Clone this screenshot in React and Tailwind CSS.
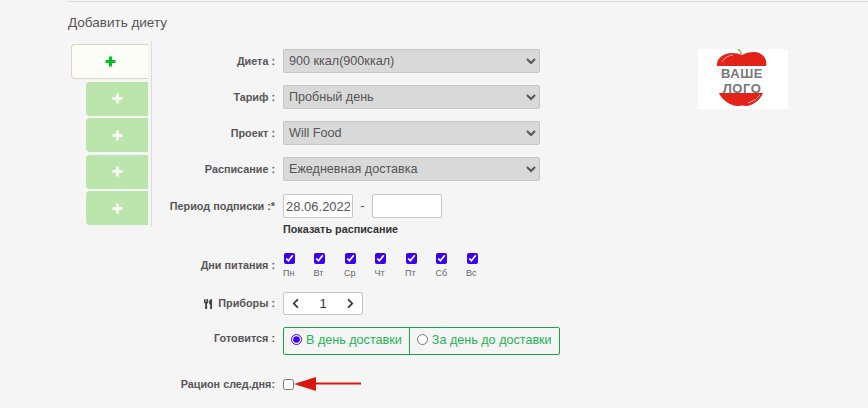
import React from "react";
import { FaUtensils, FaChevronLeft, FaChevronRight } from "react-icons/fa";

const days = ["Пн", "Вт", "Ср", "Чт", "Пт", "Сб", "Вс"];
const selects = [
  { label: "Диета :", value: "900 ккал(900ккал)" },
  { label: "Тариф :", value: "Пробный день" },
  { label: "Проект :", value: "Will Food" },
  { label: "Расписание :", value: "Ежедневная доставка" },
];

function Label({ children, width, className = "" }) {
  return (
    <div className={`${width} shrink-0 mr-[8px] text-right text-[10.8px] font-bold leading-[14px] text-[#555] whitespace-nowrap ${className}`}>
      {children}
    </div>
  );
}

function Plus({ color }) {
  return (
    <svg width="11" height="11" viewBox="0 0 11 11">
      <path d="M4 0.5 H7 V4 H10.5 V7 H7 V10.5 H4 V7 H0.5 V4 H4 Z" fill={color} />
    </svg>
  );
}

function Logo() {
  return (
    <div className="w-[90px] h-[60px] bg-white mt-[8px]">
      <svg width="90" height="60" viewBox="0 0 90 60">
        <path d="M43 5 Q43 2 40 0" stroke="#8ab34a" strokeWidth="1.5" fill="none" />
        <path d="M19 17 C18 10 25 4 34 4 Q40 4 44 6 Q49 3 56 3 C64 3 70 10 68 17 Z" fill="#e3231a" />
        <path d="M21 44 L65 44 C63 50 55 57 48 57 Q44 56 40 57 C32 57 23 50 21 44 Z" fill="#e3231a" />
        <path d="M24 13 Q27 7 35 6" stroke="#f6b0a8" strokeWidth="1" fill="none" />
        <path d="M50 54 Q58 52 62 46" stroke="#f6b0a8" strokeWidth="1" fill="none" />
        <text x="44" y="28.5" textAnchor="middle" fontFamily="Liberation Sans, sans-serif" fontSize="13" letterSpacing="0.5" fontWeight="700" fill="#777777">ВАШЕ</text>
        <text x="44" y="43.5" textAnchor="middle" fontFamily="Liberation Sans, sans-serif" fontSize="13" letterSpacing="0.5" fontWeight="700" fill="#777777">ЛОГО</text>
      </svg>
    </div>
  );
}

export default function App() {
  return (
    <div className="h-[408px] overflow-hidden bg-[#f5f5f5] pl-[68px] font-['Liberation_Sans',Arial,sans-serif]">
      <div className="h-[2px] mt-px border-t border-[#dcdcdc]"></div>
      <h3 className="mt-[12px] text-[13.5px] leading-[16px] text-[#555]">Добавить диету</h3>

      <div className="flex mt-[10px]">
        {/* tabs */}
        <div className="w-[84px] h-[186px] pl-[3px] border-r border-[#dddddd] pt-[3px] shrink-0">
          <div className="w-[77px] h-[35px] flex items-center justify-center rounded-l-[4px] border border-r-0 border-[#d9d4c4] bg-[#fdfdf8]">
            <Plus color="#00c020" />
          </div>
          <div className="ml-[15px] mt-[2.5px] flex flex-col gap-[2.5px]">
            {[0, 1, 2, 3].map((i) => (
              <div key={i} className="w-[62px] h-[34px] flex items-center justify-center rounded-l-[4px] bg-[#bce5ad]">
                <Plus color="#f5f9f2" />
              </div>
            ))}
          </div>
        </div>

        {/* form */}
        <div className="shrink-0 w-[389px] -ml-[1px] pt-[8px] text-[#555]">
          {selects.map((s) => (
            <div key={s.label} className="flex items-center h-[24px] mb-[12px]">
              <Label width="w-[124px]">{s.label}</Label>
              <select defaultValue={s.value} className="w-[257px] h-[24px] rounded-[2px] border border-[#c6c6c6] bg-[#d9d9d9] pl-[1px] text-[12.6px] text-[#555]">
                <option>{s.value}</option>
              </select>
            </div>
          ))}
          <div className="flex items-center h-[24px] mt-[13px]">
            <Label width="w-[124px]">Период подписки :*</Label>
            <input readOnly value="28.06.2022" className="w-[70px] h-[24px] rounded-[2px] border border-[#c6c6c6] bg-white px-[2px] text-[13px] text-[#555]" />
            <span className="w-[19px] text-center text-[13px]">-</span>
            <input readOnly className="w-[70px] h-[24px] rounded-[2px] border border-[#c6c6c6] bg-white" />
          </div>
          <div className="ml-[132px] mt-[4px] text-[10.8px] font-bold leading-[14px] text-[#333]">Показать расписание</div>
        </div>

        <div className="ml-[158px]"><Logo /></div>
      </div>

      <div className="-ml-[68px] text-[#555]">
        <div className="flex items-center h-[27px] mt-[17px]">
          <Label width="w-[275px]" className="mb-[3px]">Дни питания :</Label>
          <div className="flex">
            {days.map((d) => (
              <label key={d} className="w-[30.5px] flex flex-col items-start">
                <input type="checkbox" defaultChecked className="w-[11px] h-[11px] m-[0px] ml-[0.5px] accent-[#3a00f0]" />
                <span className="mt-[3px] text-[9px] leading-[13px] text-[#666]">{d}</span>
              </label>
            ))}
          </div>
        </div>

        <div className="flex items-center h-[23px] mt-[12px]">
          <Label width="w-[275px]">
            <FaUtensils className="inline mr-[5px] mb-[2px] text-[10px] text-[#444]" />
            Приборы :
          </Label>
          <div className="w-[80px] h-[23px] flex items-center justify-between rounded-[2px] border border-[#c6c6c6] bg-white px-[6px] text-[13px] text-[#333]">
            <FaChevronLeft className="text-[11px]" />
            <span>1</span>
            <FaChevronRight className="text-[11px]" />
          </div>
        </div>

        <div className="flex items-center h-[28px] mt-[12px]">
          <Label width="w-[275px]" className="mb-[6px]">Готовится :</Label>
          <div className="flex h-[28px] rounded-[2px] border border-[#16a34a] text-[12.6px] text-[#1fb356]">
            <label className="flex items-center pl-[7px] pr-[7px] border-r border-[#16a34a] pb-[2px]">
              <input type="radio" name="cook" defaultChecked className="w-[11px] h-[11px] m-[0px] mr-[4px] mb-[2px] accent-[#3a00f0]" />
              В день доставки
            </label>
            <label className="flex items-center px-[7px] pb-[2px]">
              <input type="radio" name="cook" className="w-[11px] h-[11px] m-[0px] mr-[4px] mb-[2px]" />
              За день до доставки
            </label>
          </div>
        </div>

        <div className="flex items-center h-[14px] mt-[22px]">
          <Label width="w-[275px]">Рацион след.дня:</Label>
          <input type="checkbox" className="w-[11px] h-[11px] m-[0px]" />
          <svg width="67" height="14" viewBox="0 0 67 14">
            <path d="M0 7 L22 0 L22 5.5 L67 5.5 L67 7.5 L22 7.5 L22 14 Z" fill="#d8170e" />
          </svg>
        </div>
      </div>
    </div>
  );
}
